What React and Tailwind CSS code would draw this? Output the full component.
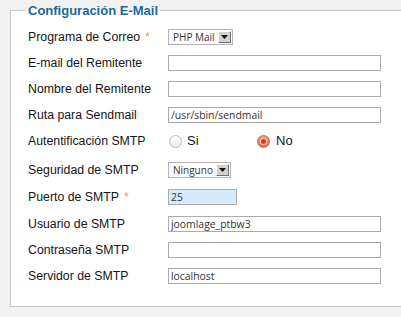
import React from "react";

function Label({ text, req }) {
  return (
    <div className="w-[140px] shrink-0 text-[12.3px] leading-[14px] text-[#151515] font-['Liberation_Sans',Arial,sans-serif] whitespace-nowrap">
      {text}
      {req && <span className="ml-[5px] text-[#dba64e]">*</span>}
    </div>
  );
}

function Row({ label, req, children, cls = "" }) {
  return (
    <div className={`flex items-center h-[26px] ${cls}`}>
      <Label text={label} req={req} />
      <div className="flex items-center">{children}</div>
    </div>
  );
}

function TextInput({ value = "", w = "w-[213px]", bg = "bg-white" }) {
  return (
    <input
      readOnly
      value={value}
      className={`${w} h-[16px] border border-[#acacac] ${bg} px-[2px] text-[10.4px] leading-[14px] text-[#333] font-['Open_Sans',sans-serif] outline-none`}
    />
  );
}

function Select({ value, w }) {
  return (
    <div
      className={`${w} h-[16px] border border-[#b3b3b3] bg-white flex items-center justify-between pl-[4px] pr-[1px]`}
    >
      <span className="text-[10px] leading-[14px] text-[#333] font-['Open_Sans',sans-serif]">{value}</span>
      <span className="w-[13px] h-[12px] bg-[#d4d1cc] border border-t-white border-l-white border-b-[#707070] border-r-[#707070] flex items-center justify-center">
        <svg width="7" height="4" viewBox="0 0 7 4">
          <path d="M0 0h7L3.5 4z" fill="#111" />
        </svg>
      </span>
    </div>
  );
}

function Radio({ checked }) {
  if (checked) {
    return (
      <span className="w-[13px] h-[13px] rounded-full border border-[#d8663f] bg-gradient-to-b from-[#f6a184] to-[#e8673f] flex items-center justify-center">
        <span className="w-[5px] h-[5px] rounded-full bg-[#c8401c] ring-1 ring-[#fbd2c2]" />
      </span>
    );
  }
  return (
    <span className="w-[13px] h-[13px] rounded-full border border-[#b9b9b9] bg-gradient-to-b from-[#ffffff] to-[#ececec]" />
  );
}

export default function App() {
  return (
    <div className="w-[401px] h-[317px] overflow-hidden bg-[#f2f2f2] font-['Liberation_Sans',Arial,sans-serif]">
      <fieldset className="ml-[10px] mt-[2px] w-[420px] border border-[#cacaca] bg-white pl-[17px] pb-[17px]">
        <legend className="-ml-[2px] px-[2px] h-[17px] leading-[17px] text-[13px] font-bold text-[#20679d]">
          Configuración E-Mail
        </legend>
        <div className="pt-[5px]">
          <Row label="Programa de Correo" req>
            <Select value="PHP Mail" w="w-[65px]" />
          </Row>
          <Row label="E-mail del Remitente">
            <TextInput />
          </Row>
          <Row label="Nombre del Remitente">
            <TextInput />
          </Row>
          <Row label="Ruta para Sendmail">
            <TextInput value="/usr/sbin/sendmail" />
          </Row>
          <Row label="Autentificación SMTP">
            <div className="flex items-center w-[89px] pl-[1px]">
              <Radio />
              <span className="ml-[5px] text-[13px] text-[#151515]">Si</span>
            </div>
            <div className="flex items-center">
              <Radio checked />
              <span className="ml-[6px] text-[13px] text-[#151515]">No</span>
            </div>
          </Row>
          <Row label="Seguridad de SMTP" cls="mt-[3px]">
            <Select value="Ninguno" w="w-[63px]" />
          </Row>
          <Row label="Puerto de SMTP" req cls="mt-[1px]">
            <TextInput value="25" w="w-[69px]" bg="bg-[#d6ebfc]" />
          </Row>
          <Row label="Usuario de SMTP" cls="mt-[1px]">
            <TextInput value="joomlage_ptbw3" />
          </Row>
          <Row label="Contraseña SMTP">
            <TextInput />
          </Row>
          <Row label="Servidor de SMTP">
            <TextInput value="localhost" />
          </Row>
        </div>
      </fieldset>
    </div>
  );
}
